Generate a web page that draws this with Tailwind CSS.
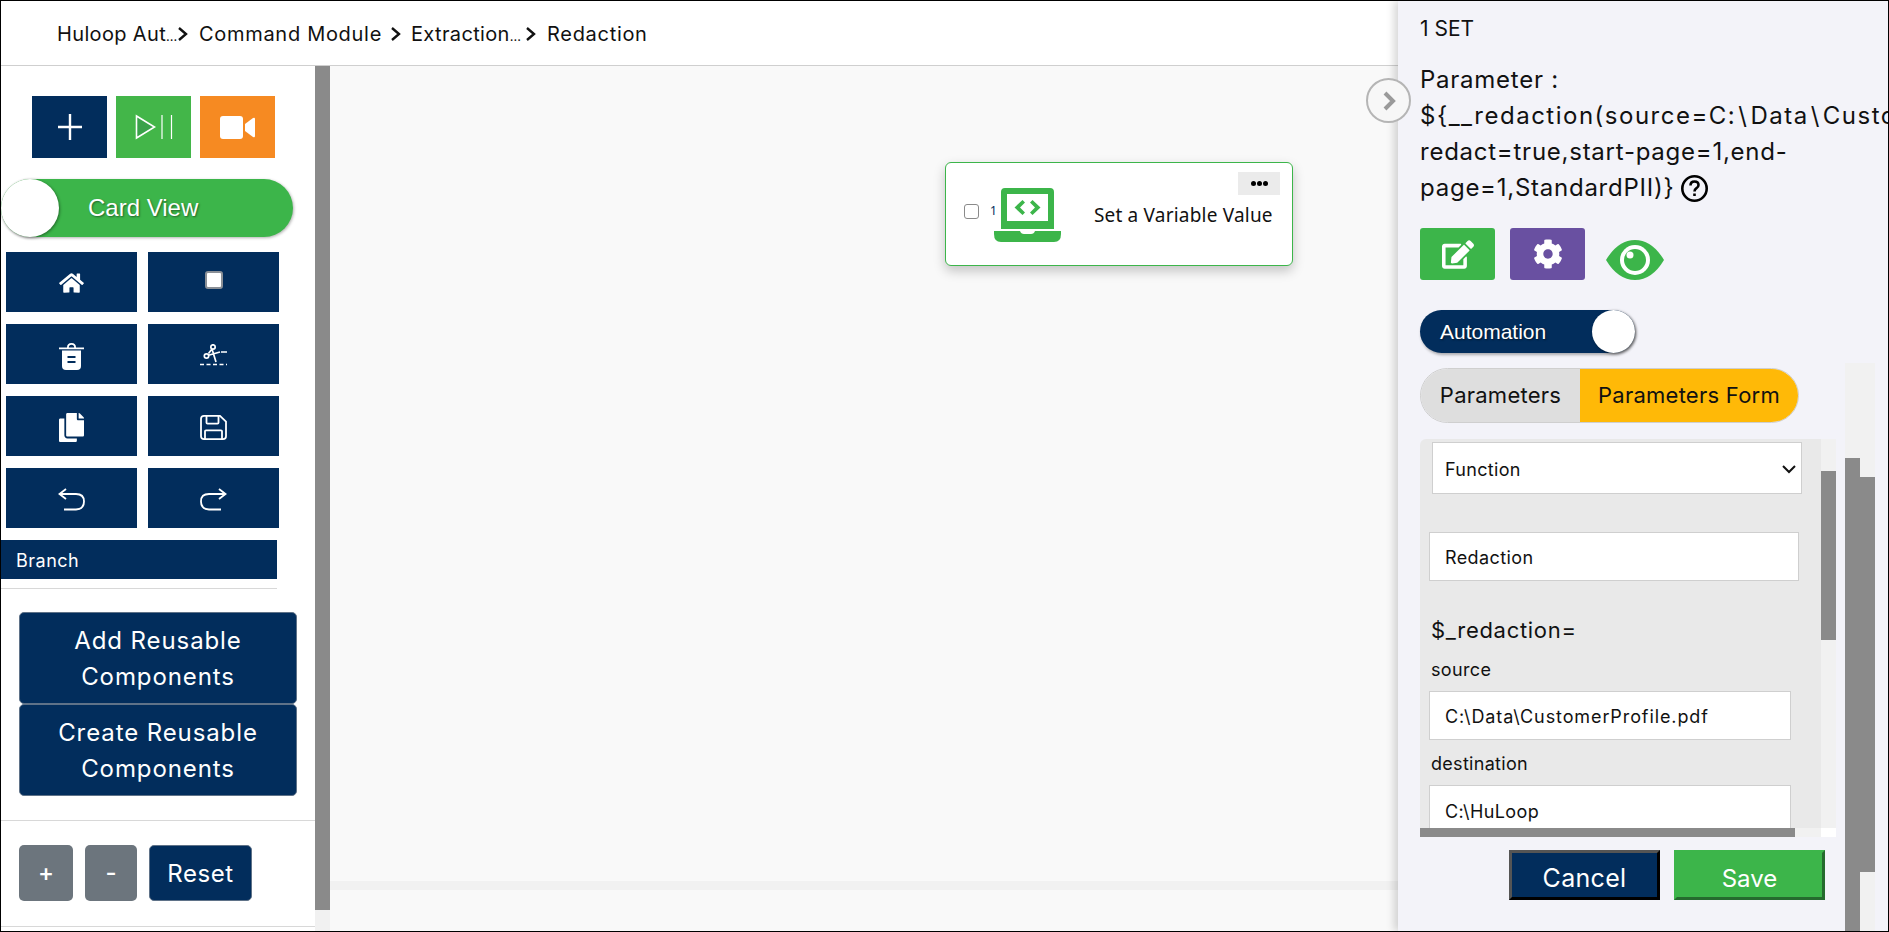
<!DOCTYPE html>
<html lang="en">
<head>
    <meta charset="UTF-8">
    <title>Redaction</title>
    <script src="https://cdn.jsdelivr.net/npm/@tailwindcss/browser@4"></script>
</head>
<body class="overflow-hidden">
    <div class="flex w-[1889px] h-[932px] border border-black bg-white overflow-hidden font-['Inter',sans-serif] text-[#111]">

        <!-- left part: breadcrumb, sidebar, canvas -->
        <div class="flex flex-col w-[1397px]">
            <header class="flex items-center h-[65px] border-b border-[#cfcfcf] pl-[56px] pt-[1px] text-[20px] tracking-[.7px] whitespace-nowrap">
                <span class="w-[120px] tracking-[.35px]">Huloop Aut<span class="text-[13px] tracking-normal">...</span></span>
                <svg class="w-[12px] h-[16px] mr-[10px]" viewBox="0 0 12 16" fill="none" stroke="#111" stroke-width="2.400"><path d="M2 2l7 6-7 6"/></svg>
                <span class="w-[191px]">Command Module</span>
                <svg class="w-[12px] h-[16px] mr-[9px]" viewBox="0 0 12 16" fill="none" stroke="#111" stroke-width="2.400"><path d="M2 2l7 6-7 6"/></svg>
                <span class="w-[114px] tracking-[.35px]">Extraction<span class="text-[13px] tracking-normal">...</span></span>
                <svg class="w-[12px] h-[16px] mr-[10px]" viewBox="0 0 12 16" fill="none" stroke="#111" stroke-width="2.400"><path d="M2 2l7 6-7 6"/></svg>
                <span>Redaction</span>
            </header>

            <div class="flex flex-1">
                <aside class="w-[314px] flex flex-col">
                    <div class="flex gap-[9px] ml-[31px] mt-[30px]">
                        <div class="w-[75px] h-[62px] bg-[#022d5c] flex items-center justify-center">
                            <svg class="w-[26px] h-[28px]" viewBox="0 0 26 28" stroke="#fff" stroke-width="2.400"><path d="M13 1v26M1 14h24"/></svg>
                        </div>
                        <div class="w-[75px] h-[62px] bg-[#43b649] flex items-center justify-center">
                            <svg class="w-[38px] h-[26px]" viewBox="0 0 38 26" fill="none" stroke="#fff"><path d="M1.500 2l18 11-18 11z" fill="#3aa24a" stroke-width="1.600"/><path d="M27 1v24M36.500 1v24" stroke-width="1.200"/></svg>
                        </div>
                        <div class="w-[75px] h-[62px] bg-[#f68a22] flex items-center justify-center">
                            <svg class="w-[35px] h-[23px]" viewBox="0 0 35 23" fill="#fff"><rect x="0" y="0" width="23" height="23" rx="3"/><path d="M25 8l8-6q2-1 2 1v17q0 2-2 1l-8-6z"/></svg>
                        </div>
                    </div>

                    <div class="relative w-[292px] h-[58px] mt-[21px] rounded-full bg-[#3cb54a] shadow-[1px_1px_3px_rgba(0,0,0,.3)] flex items-center pl-[87px] text-white text-[24px] font-['Liberation_Sans',sans-serif] [text-shadow:1px_1px_2px_rgba(0,0,0,.45)]">
                        Card View
                        <div class="absolute left-0 top-0 w-[58px] h-[58px] rounded-full bg-white shadow-[1px_1px_3px_rgba(0,0,0,.4)]"></div>
                    </div>

                    <div class="grid grid-cols-[131px_131px] auto-rows-[60px] gap-x-[11px] gap-y-[12px] ml-[5px] mt-[15px]">
                        <div class="bg-[#022d5c] flex items-center justify-center pt-[2px]">
                            <svg class="w-[25px] h-[22px]" viewBox="0 0 576 512" fill="#fff"><path d="M280.370 148.260L96 300.110V464a16 16 0 0 0 16 16l112.060-.29a16 16 0 0 0 15.920-16V368a16 16 0 0 1 16-16h64a16 16 0 0 1 16 16v95.640a16 16 0 0 0 16 16.050L464 480a16 16 0 0 0 16-16V300L295.670 148.260a12.190 12.190 0 0 0-15.300 0zM571.600 251.470L488 182.560V44.050a12 12 0 0 0-12-12h-56a12 12 0 0 0-12 12v72.610L318.470 43a48 48 0 0 0-61 0L4.340 251.470a12 12 0 0 0-1.600 16.900l25.500 31A12 12 0 0 0 45.150 301l235.220-193.740a12.190 12.190 0 0 1 15.300 0L530.900 301a12 12 0 0 0 16.900-1.600l25.500-31a12 12 0 0 0-1.700-16.930z"/></svg>
                        </div>
                        <div class="bg-[#022d5c] flex items-center justify-center pb-[4px]">
                            <div class="w-[18px] h-[18px] bg-white rounded-[3px] border-2 border-[#8a8f96]"></div>
                        </div>
                        <div class="bg-[#022d5c] flex items-center justify-center pt-[3px]">
                            <svg class="w-[25px] h-[28px]" viewBox="0 0 25 28" fill="#fff"><path d="M0 5.500h25v1.700H0zM8 5.500q0-4.500 4.500-4.500t4.500 4.500h-1.800q0-2.700-2.700-2.700t-2.700 2.700z"/><path d="M3 8.500h19v15.500q0 4-4 4H7q-4 0-4-4z"/><path d="M8.500 14h8v2h-8zM8.500 19h8v2h-8z" fill="#022d5c"/></svg>
                        </div>
                        <div class="bg-[#022d5c] flex items-center justify-center pt-[2px]">
                            <svg class="w-[28px] h-[22px]" viewBox="0 0 28 22" fill="none" stroke="#fff" stroke-width="1.700"><circle cx="13" cy="3" r="2.200"/><circle cx="6.500" cy="12" r="2.200"/><path d="M8.500 11.200L20 8M12 5l4 13M12 5L8.500 9.500M21 8h6"/><path d="M0 20.500h27" stroke-dasharray="4 2.500"/></svg>
                        </div>
                        <div class="bg-[#022d5c] flex items-center justify-center pt-[3px]">
                            <svg class="w-[25px] h-[29px]" viewBox="0 0 448 512" fill="#fff" preserveAspectRatio="none"><path d="M320 448v40c0 13.255-10.745 24-24 24H24c-13.255 0-24-10.745-24-24V120c0-13.255 10.745-24 24-24h72v296c0 30.879 25.121 56 56 56h168zm0-344V0H152c-13.255 0-24 10.745-24 24v368c0 13.255 10.745 24 24 24h272c13.255 0 24-10.745 24-24V128H344c-13.200 0-24-10.800-24-24zm120.971-31.029L375.029 7.029A24 24 0 0 0 358.059 0H352v96h96v-6.059a24 24 0 0 0-7.029-16.970z"/></svg>
                        </div>
                        <div class="bg-[#022d5c] flex items-center justify-center pt-[2px]">
                            <svg class="w-[27px] h-[25px]" viewBox="0 0 27 26" fill="none" stroke="#fff" stroke-width="1.800" preserveAspectRatio="none"><path d="M4 1h16l6 6v15q0 3-3 3H4q-3 0-3-3V4q0-3 3-3z"/><path d="M6.500 1v7q0 1 1 1h10q1 0 1-1V1M5 25v-8q0-1 1-1h15q1 0 1 1v8"/></svg>
                        </div>
                        <div class="bg-[#022d5c] flex items-center justify-center pt-[2px]">
                            <svg class="w-[27px] h-[23px]" viewBox="0 0 27 23" fill="none" stroke="#fff" stroke-width="1.800"><path d="M8 1L1.500 6 8 11M1.500 6H18q8 0 8 7.500T18 21.500H6"/></svg>
                        </div>
                        <div class="bg-[#022d5c] flex items-center justify-center pt-[2px]">
                            <svg class="w-[27px] h-[23px]" viewBox="0 0 27 23" fill="none" stroke="#fff" stroke-width="1.800"><path d="M19 1l6.500 5L19 11M25.500 6H9q-8 0-8 7.500t8 8h12"/></svg>
                        </div>
                    </div>

                    <div class="w-[276px] h-[39px] mt-[12px] pt-[1px] bg-[#022d5c] text-white text-[18px] tracking-[.5px] flex items-center pl-[15px]">Branch</div>
                    <div class="w-[276px] h-px mt-[9px] bg-[#d8d8d8]"></div>

                    <div class="w-[278px] h-[92px] mt-[23px] ml-[18px] pt-[1px] bg-[#022d5c] border border-[#5f7288] rounded-[5px] text-white text-[24px] tracking-[.9px] leading-[36px] text-center flex items-center justify-center">Add Reusable<br>Components</div>
                    <div class="w-[278px] h-[92px] ml-[18px] pt-[1px] bg-[#022d5c] border border-[#5f7288] rounded-[5px] text-white text-[24px] tracking-[.9px] leading-[36px] text-center flex items-center justify-center">Create Reusable<br>Components</div>

                    <div class="h-px mt-[24px] bg-[#d8d8d8]"></div>
                    <div class="flex gap-[12px] ml-[18px] mt-[24px]">
                        <div class="w-[54px] h-[56px] bg-[#6c757d] rounded-[5px] text-white text-[24px] font-medium flex items-center justify-center">+</div>
                        <div class="w-[52px] h-[56px] bg-[#6c757d] rounded-[5px] text-white text-[24px] font-medium flex items-center justify-center">-</div>
                        <div class="w-[103px] h-[56px] pt-[1px] bg-[#022d5c] border border-[#5f7288] rounded-[5px] text-white text-[24px] tracking-[.6px] flex items-center justify-center">Reset</div>
                    </div>
                    <div class="h-px mt-[25px] bg-[#d8d8d8]"></div>
                </aside>

                <!-- sidebar scrollbar -->
                <div class="w-[15px] bg-[#f1f1f1]">
                    <div class="h-[844px] bg-[#8a8a8a]"></div>
                </div>

                <!-- canvas -->
                <main class="relative flex-1 bg-[#f9f9f9]">
                    <div class="h-[815px]"></div>
                    <div class="h-[9px] bg-[#f1f1f1]"></div>

                    <div class="absolute left-[615px] top-[96px] w-[348px] h-[104px] bg-white border border-[#3cb54a] rounded-[6px] shadow-[0_5px_12px_rgba(0,0,0,.22)] flex items-center font-['Noto_Sans',sans-serif]">
                        <div class="w-[15px] h-[15px] ml-[18px] mb-[6px] rounded-[3px] border-[1.5px] border-[#8a8a8a] bg-white"></div>
                        <span class="ml-[11px] mb-[6px] text-[12px] text-[#022d5c]">1</span>
                        <svg class="w-[67px] h-[54px] ml-[-3px] mt-[1px]" viewBox="0 0 67 54" fill="#3cb54a"><path fill-rule="evenodd" d="M11 0h45q4 0 4 4v37H7V4q0-4 4-4zM13 6v27h41V6z"/><path d="M0 43h26q1 3 4 3h7q3 0 4-3h26v3q0 8-7 8H7q-7 0-7-8z"/><path d="M28.500 12l2.500 2.500-5 5 5 5-2.500 2.500-8-7.500zM38.500 12l-2.500 2.500 5 5-5 5 2.500 2.500 8-7.500z"/></svg>
                        <span class="ml-[33px] mt-[2px] text-[19px] tracking-[.2px] whitespace-nowrap text-[#111]">Set a Variable Value</span>
                        <div class="absolute right-[12px] top-[9px] w-[42px] h-[23px] bg-[#ebebeb] flex items-center justify-center gap-[1px]">
                            <span class="w-[5px] h-[5px] rounded-full bg-black"></span>
                            <span class="w-[5px] h-[5px] rounded-full bg-black"></span>
                            <span class="w-[5px] h-[5px] rounded-full bg-black"></span>
                        </div>
                    </div>
                </main>
            </div>
        </div>

        <!-- right panel -->
        <section class="relative z-10 flex-1 flex bg-[#f3f3f9] shadow-[-4px_0_8px_rgba(0,0,0,.16)]">
            <div class="absolute left-[-32px] top-[77px] w-[45px] h-[45px] rounded-full border-2 border-[#b5b5b5] bg-[#f7f7f7] flex items-center justify-center">
                <svg class="w-[14px] h-[20px]" viewBox="0 0 14 20" fill="none" stroke="#9a9a9a" stroke-width="4"><path d="M3 2l8 8-8 8"/></svg>
            </div>

            <div class="w-[447px] pl-[22px] flex flex-col">
                <div class="h-[36px] mt-[10px] text-[21px] leading-[36px]">1 SET</div>
                <div class="mt-[15px] w-[468px] text-[24px] tracking-[.75px] leading-[36px] whitespace-nowrap overflow-hidden">
                    <div>Parameter :</div>
                    <div class="tracking-[1.5px]">${__redaction(source=C:<span class="mx-[2px]">\</span>Data<span class="mx-[2px]">\</span>CustomerProfile.pdf</div>
                    <div>redact=true,start-page=1,end-</div>
                    <div class="flex items-center">page=1,StandardPII)}
                        <svg class="w-[27px] h-[27px] ml-[7px]" viewBox="0 0 27 27" fill="none" stroke="#000" stroke-width="2.600"><circle cx="13.500" cy="13.500" r="12.200"/><path d="M9.500 10.500q0-4 4-4t4 3.500q0 2-2 3.200t-2 3.300M13.500 18.500v2.500"/></svg>
                    </div>
                </div>

                <div class="flex items-start mt-[22px]">
                    <div class="w-[75px] h-[52px] rounded-[3px] bg-[#3cb54a] flex items-center justify-center">
                        <svg class="w-[32px] h-[29px]" viewBox="0 0 576 512" fill="#fff"><path d="M402.600 83.200l90.200 90.200c3.800 3.800 3.800 10 0 13.800L274.400 405.600l-92.800 10.300c-12.400 1.400-22.900-9.100-21.500-21.500l10.300-92.800L388.800 83.200c3.800-3.800 10-3.800 13.800 0zm162-22.900l-48.800-48.800c-15.200-15.200-39.900-15.200-55.200 0l-35.400 35.400c-3.800 3.800-3.800 10 0 13.800l90.200 90.200c3.800 3.800 10 3.800 13.800 0l35.400-35.400c15.200-15.300 15.200-40 0-55.200zM384 346.200V448H64V128h229.800c3.200 0 6.200-1.300 8.500-3.500l40-40c7.600-7.600 2.200-20.500-8.500-20.500H48C21.500 64 0 85.500 0 112v352c0 26.500 21.500 48 48 48h352c26.500 0 48-21.500 48-48V306.200c0-10.700-12.900-16-20.500-8.500l-40 40c-2.200 2.300-3.500 5.300-3.500 8.500z"/></svg>
                    </div>
                    <div class="w-[75px] h-[52px] ml-[15px] rounded-[3px] bg-[#6950a1] flex items-center justify-center">
                        <svg class="w-[30px] h-[30px]" viewBox="0 0 512 512" fill="#fff"><path d="M487.400 315.700l-42.600-24.600c4.300-23.200 4.300-47 0-70.200l42.600-24.600c4.900-2.800 7.100-8.600 5.500-14-11.100-35.600-30-67.800-54.700-94.600-3.800-4.100-10-5.100-14.800-2.300L380.800 110c-17.900-15.400-38.500-27.300-60.800-35.100V25.800c0-5.600-3.900-10.500-9.400-11.700-36.700-8.200-74.300-7.800-109.200 0-5.500 1.200-9.400 6.100-9.400 11.700V75c-22.200 7.900-42.800 19.800-60.800 35.100L88.700 85.500c-4.900-2.800-11-1.900-14.800 2.300-24.700 26.700-43.600 58.900-54.700 94.600-1.700 5.400.6 11.200 5.500 14L67.300 221c-4.300 23.200-4.300 47 0 70.200l-42.600 24.600c-4.900 2.800-7.100 8.600-5.500 14 11.100 35.600 30 67.800 54.700 94.600 3.800 4.100 10 5.100 14.800 2.300l42.600-24.600c17.900 15.400 38.500 27.300 60.800 35.100v49.200c0 5.600 3.900 10.500 9.400 11.700 36.700 8.200 74.300 7.800 109.200 0 5.500-1.200 9.400-6.100 9.400-11.700v-49.200c22.200-7.900 42.800-19.800 60.800-35.100l42.600 24.600c4.900 2.800 11 1.900 14.800-2.300 24.700-26.700 43.600-58.900 54.700-94.600 1.500-5.500-.7-11.300-5.600-14.100zM256 336c-44.100 0-80-35.900-80-80s35.900-80 80-80 80 35.900 80 80-35.900 80-80 80z"/></svg>
                    </div>
                    <svg class="w-[58px] h-[40px] ml-[21px] mt-[12px]" viewBox="0 0 58 40"><path fill="#3cb54a" d="M0 20Q12 0 29 0t29 20Q46 40 29 40T0 20z"/><circle cx="29" cy="20" r="15" fill="#fff"/><circle cx="29" cy="20" r="11" fill="#3cb54a"/><circle cx="24" cy="15" r="3.500" fill="#fff"/></svg>
                </div>

                <div class="relative w-[215px] h-[43px] mt-[30px] rounded-full bg-[#022d5c] shadow-[1px_2px_3px_rgba(0,0,0,.3)] flex items-center pl-[20px] text-white text-[21px] font-['Liberation_Sans',sans-serif] [text-shadow:1px_1px_2px_rgba(0,0,0,.5)]">
                    Automation
                    <div class="absolute right-0 top-0 w-[43px] h-[43px] rounded-full bg-white shadow-[1px_1px_3px_rgba(0,0,0,.5)]"></div>
                </div>

                <div class="flex w-[379px] h-[55px] mt-[15px] rounded-full border border-[#cfcfcf] overflow-hidden text-[22px] tracking-[.25px]">
                    <div class="w-[159px] bg-[#dedede] flex items-center justify-center">Parameters</div>
                    <div class="flex-1 bg-[#ffb907] flex items-center justify-center">Parameters Form</div>
                </div>

                <!-- parameters form -->
                <div class="flex flex-col w-[416px] h-[398px] mt-[16px]">
                    <div class="flex h-[389px]">
                        <div class="w-[401px] bg-[#e9e9e9] rounded-tl-[6px] overflow-hidden">
                            <div class="flex items-center justify-between w-[370px] h-[52px] mt-[3px] ml-[12px] bg-white border border-[#cfcfcf] pl-[12px] pr-[5px] pt-[2px] text-[18px] tracking-[.3px]">
                                Function
                                <svg class="w-[14px] h-[9px]" viewBox="0 0 14 9" fill="none" stroke="#111" stroke-width="2"><path d="M1 1l6 6 6-6"/></svg>
                            </div>
                            <div class="flex items-center w-[370px] h-[49px] mt-[38px] ml-[9px] bg-white border border-[#cfcfcf] pl-[15px] pt-[2px] text-[18px] tracking-[.4px]">Redaction</div>
                            <div class="h-[30px] mt-[34px] ml-[11px] text-[22px] tracking-[.7px] leading-[30px]">$_redaction=</div>
                            <div class="h-[24px] mt-[13px] ml-[11px] text-[18px] tracking-[.35px] leading-[24px]">source</div>
                            <div class="flex items-center w-[362px] h-[49px] mt-[9px] ml-[9px] bg-white border border-[#cfcfcf] pl-[15px] pt-[2px] text-[18px] tracking-[.9px]">C:\Data\CustomerProfile.pdf</div>
                            <div class="h-[24px] mt-[12px] ml-[11px] text-[18px] tracking-[.3px] leading-[24px]">destination</div>
                            <div class="flex items-center w-[362px] h-[49px] mt-[9px] ml-[9px] bg-white border border-[#cfcfcf] pl-[15px] pt-[3px] text-[18px] tracking-[.4px]">C:\HuLoop</div>
                        </div>
                        <div class="w-[15px] bg-[#f1f1f1]">
                            <div class="h-[169px] mt-[32px] bg-[#8a8a8a]"></div>
                        </div>
                    </div>
                    <div class="flex h-[9px]">
                        <div class="w-[375px] bg-[#8a8a8a]"></div>
                        <div class="w-[26px] bg-[#f1f1f1]"></div>
                        <div class="w-[15px] bg-white"></div>
                    </div>
                </div>

                <div class="flex gap-[14px] ml-[89px] mt-[13px]">
                    <div class="w-[151px] h-[50px] pt-[7px] bg-[#022d5c] border-[3px] border-t-[#555] border-l-[#555] border-r-black border-b-black text-white text-[25px] tracking-[.3px] flex items-center justify-center">Cancel</div>
                    <div class="w-[151px] h-[50px] pt-[7px] bg-[#3cb54a] border-[3px] border-t-[#3cb54a] border-l-[#3cb54a] border-r-[#256b2e] border-b-[#256b2e] text-white text-[24px] flex items-center justify-center">Save</div>
                </div>
            </div>

            <!-- outer scrollbars of the panel -->
            <div class="flex w-[30px] h-[568px] mt-[362px] bg-[#f1f1f1]">
                <div class="w-[15px] h-[473px] mt-[95px] bg-[#8a8a8a]"></div>
                <div class="w-[15px] h-[395px] mt-[114px] bg-[#8a8a8a]"></div>
            </div>
        </section>
    </div>
</body>
</html>
